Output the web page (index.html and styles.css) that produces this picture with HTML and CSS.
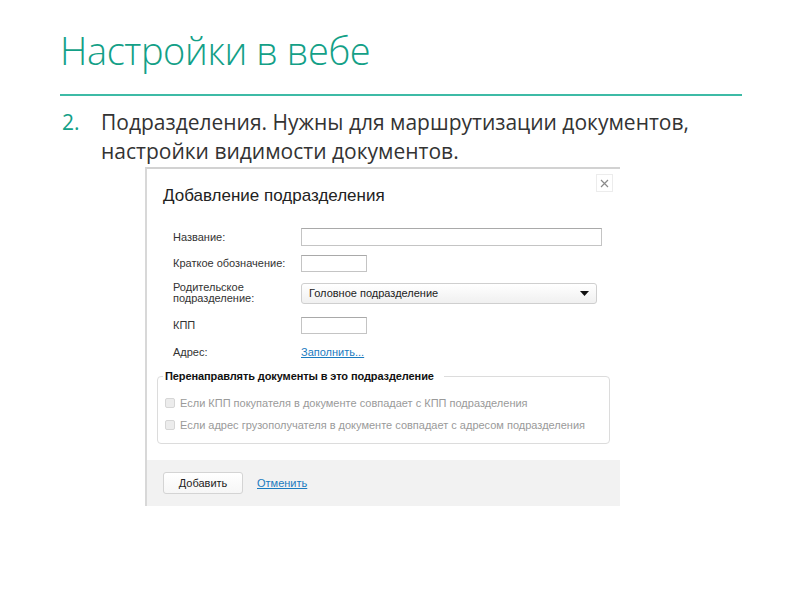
FILE: index.html
```html
<!DOCTYPE html>
<html lang="ru">
<head>
<meta charset="utf-8">
<title>Настройки в вебе</title>
<link rel="stylesheet" href="styles.css">
</head>
<body>
<div class="slide">
  <h1 class="slide-title">Настройки в вебе</h1>
  <div class="rule"></div>
  <ol class="points">
    <li class="point"><span class="num">2.</span><span class="point-text">Подразделения. Нужны для маршрутизации документов, настройки видимости документов.</span></li>
  </ol>
  <div class="dialog">
    <span class="close">
      <svg width="9" height="9" viewBox="0 0 9 9"><path d="M1 1L8 8M8 1L1 8" stroke="#8a8a8a" stroke-width="1.2"/></svg>
    </span>
    <div class="dialog-body">
      <div class="dialog-title">Добавление подразделения</div>
      <div class="form">
        <div class="row r-name"><span class="label">Название:</span><span class="input wide"></span></div>
        <div class="row r-short"><span class="label">Краткое обозначение:</span><span class="input small"></span></div>
        <div class="row r-parent"><span class="label">Родительское<br>подразделение:</span>
          <span class="select"><span>Головное подразделение</span>
            <svg width="9" height="5" viewBox="0 0 9 5"><path d="M0 0H9L4.5 5Z" fill="#111"/></svg>
          </span>
        </div>
        <div class="row r-kpp"><span class="label">КПП</span><span class="input small"></span></div>
        <div class="row r-addr"><span class="label">Адрес:</span><a class="link" href="#">Заполнить...</a></div>
      </div>
      <fieldset class="group">
        <legend class="legend">Перенаправлять документы в это подразделение</legend>
        <div class="check"><span class="box"></span>Если КПП покупателя в документе совпадает с КПП подразделения</div>
        <div class="check"><span class="box"></span>Если адрес грузополучателя в документе совпадает с адресом подразделения</div>
      </fieldset>
    </div>
    <div class="dialog-footer">
      <span class="btn">Добавить</span>
      <a class="link" href="#">Отменить</a>
    </div>
  </div>
</div>
</body>
</html>
```

FILE: styles.css
```css
html, body {
  margin: 0;
  padding: 0;
  background: #ffffff;
}
.slide {
  width: 800px;
  height: 600px;
  padding: 24px 0 0 0;
  box-sizing: border-box;
}
.slide-title {
  margin: 0 0 0 60px;
  font-family: "Open Sans", sans-serif;
  font-weight: 300;
  font-size: 38px;
  line-height: 52px;
  color: #13a087;
  letter-spacing: -0.4px;
}
.rule {
  margin: 18px 0 0 60px;
  width: 682px;
  height: 2px;
  background: #3dbba6;
}
.points {
  list-style: none;
  margin: 12px 0 0 0;
  padding: 0;
}
.point {
  display: flex;
  font-family: "Open Sans", sans-serif;
  font-size: 21px;
  line-height: 29px;
  color: #333;
}
.num {
  width: 39px;
  margin-left: 62px;
  color: #13a087;
  flex: none;
}
.point-text {
  width: 610px;
}
.dialog {
  position: relative;
  margin: 1px 0 0 145px;
  width: 475px;
  border-left: 2px solid #d8d8d8;
  border-top: 2px solid #d2d2d2;
  box-sizing: border-box;
  font-family: "Liberation Sans", Arial, sans-serif;
}
.close {
  position: absolute;
  top: 5px;
  right: 7px;
  width: 15px;
  height: 16px;
  border: 1px solid #ececec;
  display: flex;
  align-items: center;
  justify-content: center;
}
.dialog-body {
  padding: 17px 0 16px 0;
}
.dialog-title {
  margin-left: 16px;
  font-size: 17px;
  line-height: 20px;
  color: #222;
}
.form {
  margin: 22px 0 0 26px;
  display: flex;
  flex-direction: column;
  gap: 8px;
}
.row {
  display: flex;
  align-items: center;
  height: 18px;
}
.r-parent { height: 26px; }
.r-kpp { height: 22px; }
.r-addr { height: 16px; }
.label {
  width: 128px;
  flex: none;
  font-size: 11px;
  line-height: 11px;
  color: #333;
}
.input {
  height: 17px;
  border: 1px solid #c4c4c4;
  border-top-color: #a9a9a9;
  box-sizing: border-box;
  background: #fff;
}
.input.wide { width: 301px; height: 18px; }
.input.small { width: 66px; }
.select {
  width: 296px;
  height: 21px;
  box-sizing: border-box;
  border: 1px solid #cfcfcf;
  border-radius: 3px;
  background: linear-gradient(#ffffff, #f0f0f0);
  display: flex;
  align-items: center;
  justify-content: space-between;
  padding: 0 7px 0 7px;
  font-size: 11px;
  color: #222;
}
.link {
  font-size: 11px;
  color: #1b7bbf;
  text-decoration: underline;
}
.group {
  margin: 10px 0 0 10px;
  width: 453px;
  box-sizing: border-box;
  border: 1px solid #dcdcdc;
  border-radius: 4px;
  padding: 10px 0 7px 5px;
}
.legend {
  margin-left: 0;
  padding: 0 10px 0 2px;
  font-size: 11px;
  font-weight: bold;
  color: #111;
  background: #fff;
  letter-spacing: -0.1px;
}
.check {
  display: flex;
  align-items: center;
  height: 22px;
  font-size: 11px;
  color: #9a9a9a;
}
.box {
  width: 10px;
  height: 10px;
  box-sizing: border-box;
  border: 1px solid #d6d6d6;
  background: #ececec;
  border-radius: 2px;
  margin: 0 5px 0 2px;
}
.dialog-footer {
  height: 46px;
  background: #f2f2f2;
  display: flex;
  align-items: center;
  padding-left: 16px;
  gap: 14px;
}
.btn {
  width: 80px;
  height: 22px;
  box-sizing: border-box;
  border: 1px solid #d4d4d4;
  border-radius: 3px;
  background: linear-gradient(#ffffff, #f6f6f6);
  display: flex;
  align-items: center;
  justify-content: center;
  font-size: 11px;
  color: #222;
}
```
